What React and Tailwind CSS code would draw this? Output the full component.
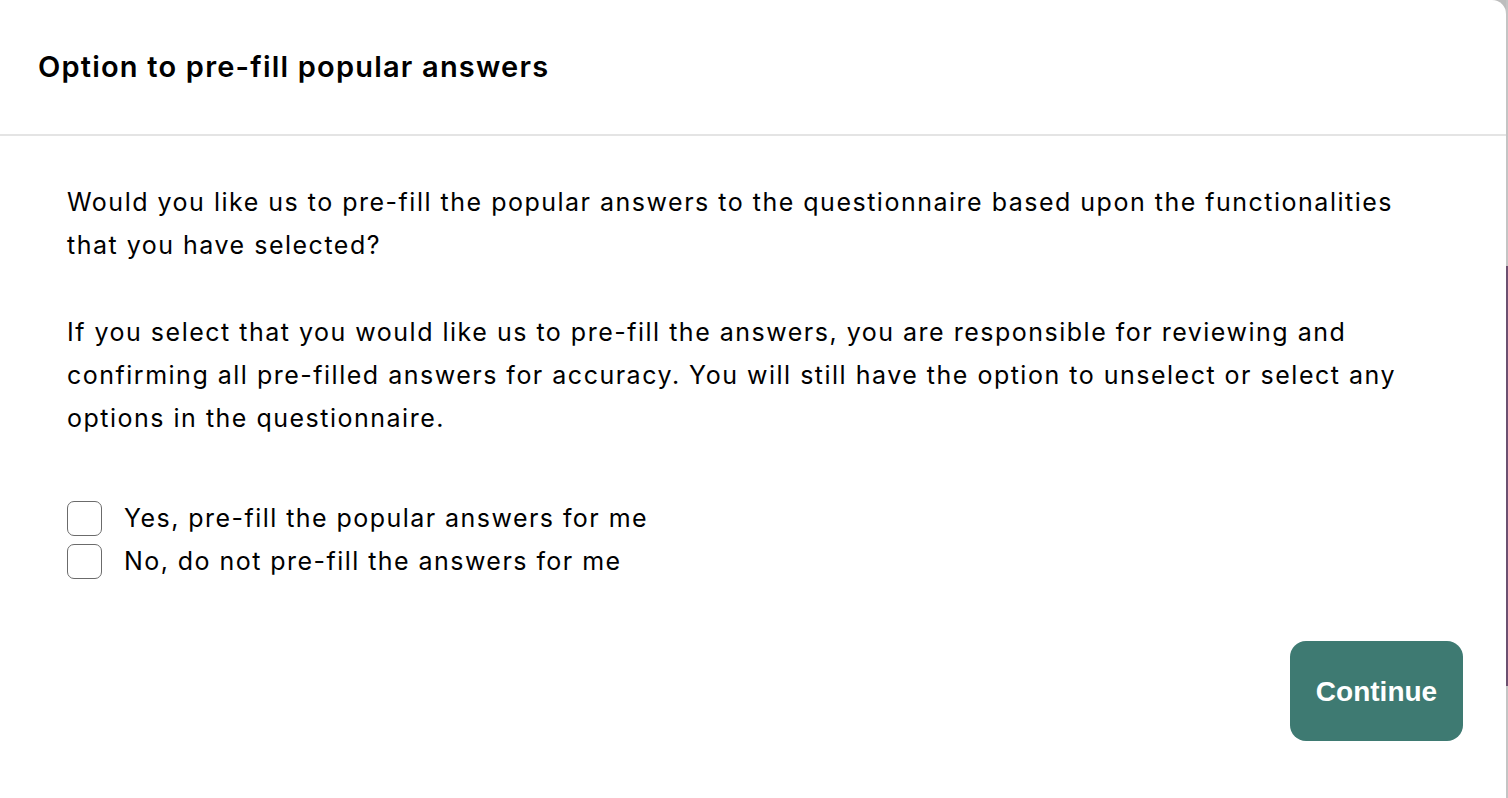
import { useState } from "react";

const OPTIONS = [
  { id: "yes", label: "Yes, pre-fill the popular answers for me" },
  { id: "no", label: "No, do not pre-fill the answers for me" },
];

export default function App() {
  const [choice, setChoice] = useState("");

  return (
    <div className="flex h-[798px] w-[1508px] overflow-hidden bg-[#bdbdbd]" style={{ fontFamily: "Inter, 'Noto Sans', sans-serif" }}>
      {/* modal panel */}
      <div className="flex w-[1506px] flex-col rounded-tr-[14px] bg-white">
        <div className="flex h-[136px] shrink-0 items-center border-b-2 border-[#e4e4e4] pl-[38px] pb-[1px]">
          <h1 className="text-[29px] font-semibold tracking-[1.2px] text-black">Option to pre-fill popular answers</h1>
        </div>

        <div className="flex flex-1 flex-col px-[67px] pt-[45px] text-[25px] leading-[43px] tracking-[1.5px] text-black">
          <p>
            Would you like us to pre-fill the popular answers to the questionnaire based upon the functionalities that you have selected?
          </p>
          <p className="mt-[44px]">
            If you select that you would like us to pre-fill the answers, you are responsible for reviewing and confirming all pre-filled answers for accuracy. You will still have the option to unselect or select any options in the questionnaire.
          </p>

          <div className="mt-[57px] flex flex-col">
            {OPTIONS.map((o) => (
              <label key={o.id} className="flex h-[43px] cursor-pointer items-center gap-[22px]">
                <span
                  onClick={() => setChoice(o.id)}
                  className={`h-[35px] w-[35px] shrink-0 rounded-[7px] border border-[#6b6b6b] ${choice === o.id ? "bg-[#3e7a72]" : "bg-white"}`}
                />
                <span className="tracking-[1.45px]">{o.label}</span>
              </label>
            ))}
          </div>

          <div className="mt-[58px] flex justify-end">
            <button
              className="-mr-[24px] h-[100px] w-[173px] rounded-[16px] bg-[#3e7a72] text-[28px] font-bold tracking-normal text-white"
              style={{ fontFamily: "'Liberation Sans', Arial, sans-serif" }}
            >
              Continue
            </button>
          </div>
        </div>
      </div>

      {/* page behind the modal */}
      <div className="flex w-[2px] flex-col">
        <div className="h-[266px] bg-[#c4c4c4]" />
        <div className="h-[420px] bg-[#6c5070]" />
        <div className="flex-1 bg-[#c4c4c4]" />
      </div>
    </div>
  );
}
